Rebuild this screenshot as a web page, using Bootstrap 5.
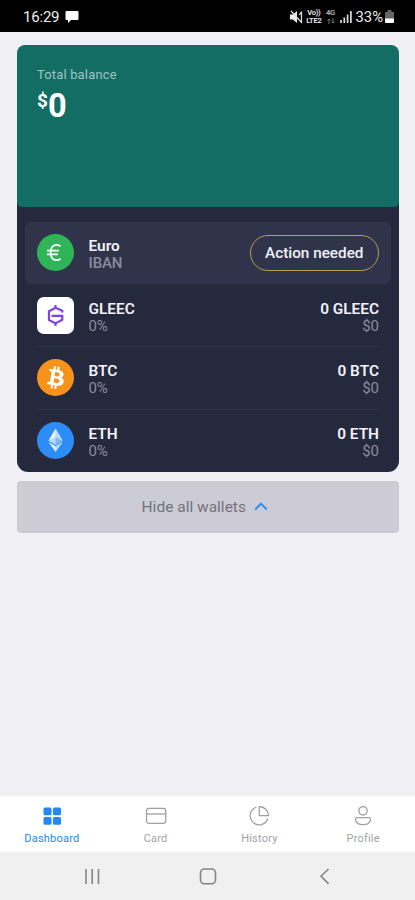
<!DOCTYPE html>
<html lang="en">
<head>
<meta charset="utf-8">
<meta name="viewport" content="width=device-width, initial-scale=1">
<title>Wallet dashboard</title>
<link href="https://cdn.jsdelivr.net/npm/bootstrap@5.3.0/dist/css/bootstrap.min.css" rel="stylesheet">
<style>
html,body{height:100%}
body{font-family:Roboto,sans-serif;background:#efeff4;overflow:hidden}
svg{display:block;flex:none}
.status{height:32px;background:#000;color:#eee;font-size:15.4px;line-height:32px;padding:1px 21px 0 23px}
.clock{font-size:15px;letter-spacing:-.2px}
.battery-text{font-size:14.8px;margin-left:4px}
.tiny{font-size:7.6px;line-height:8px;font-weight:600;text-align:center;letter-spacing:-.3px;margin-left:3px}
.net{color:#bbb;margin-left:4px}
.content{padding:12.5px 16px 0 16.5px}
.wallets{background:#25293d;border-radius:11px;height:427.5px}
.balance{background:#146d65;height:162px;border-radius:8px 8px 5px 5px;padding:21.5px 20.5px}
.balance-label{color:#9cc6c0;font-size:12.9px;line-height:17px;letter-spacing:.2px}
.amount{font-size:32.5px;line-height:40px;font-weight:700;margin-top:2.5px}
.amount .cur{font-size:19px;line-height:20px;margin-top:5.5px}
.rows{padding:15px 8px 0}
.wrow{height:62.7px;padding:0 12px 0 12.5px}
.wrow.euro{background:#2f344a;border-radius:6px}
.inner{border-bottom:1px solid #2d3145}
.wrow:last-child .inner{border-color:transparent}
.names{margin-left:14.5px}
.names,.sums{padding-top:4px}
.euro .names{padding-top:3px}
.t1{color:#f2f2f8;font-size:15.4px;line-height:17px;font-weight:600}
.t2{color:#8a8c9d;font-size:15px;line-height:16px}
.names .t2{letter-spacing:-.1px}
.semi{font-weight:500}
.action{border:1.5px solid #b5a04c!important;border-radius:18px;width:129.5px;height:35.5px;color:#f0f0f7;font-size:15.3px;font-weight:500;padding:2px 0 0;background:none}
.hide-btn{height:52.5px;margin-top:8.5px;background:#cdcbd6;border-radius:4px;color:#74737d;font-size:15.5px;padding:2px 6px 0 0;border:0}
.tabs{height:56px;background:#fff}
.tab{color:#a2a2a4;font-size:11px;line-height:14px;letter-spacing:.2px;padding-top:7.5px}
.tab.on{color:#2488f0}
.sysnav{height:48px;background:#f0f0f0}
</style>
<script src="https://cdn.jsdelivr.net/npm/bootstrap@5.3.0/dist/js/bootstrap.bundle.min.js"></script>
</head>
<body>
<div class="d-flex flex-column vh-100">
  <header class="status d-flex align-items-center justify-content-between">
    <div class="d-flex align-items-center gap-1"><span class="clock">16:29</span>
      <svg width="16" height="14" viewBox="-2 0 16 14"><path d="M1.500 1h11q1 0 1 1v7q0 1-1 1H6l-3 3v-3H1.500q-1 0-1-1V2q0-1 1-1z" fill="#fff"/></svg>
    </div>
    <div class="d-flex align-items-center">
      <svg width="13" height="14" viewBox="0 0 13 14"><path d="M0 4.500h3L7 1v12L3 9.500H0z" fill="#eee"/><path d="M1 1l11 12M9.300 5l2-3M11.500 1.500v11" fill="none" stroke="#ddd" stroke-width="1.300"/></svg>
      <div class="tiny"><div>Vo))</div><div>LTE2</div></div>
      <div class="tiny net"><div>4G</div>
        <svg width="10" height="8" viewBox="0 0 10 8"><path d="M3 7V2M1.500 3.500L3 2l1.500 1.500M7 1v5M5.500 4.500L7 6l1.500-1.500" fill="none" stroke="#777"/></svg></div>
      <svg width="16" height="13" viewBox="-4 0 16 13"><path d="M1 10v3M4.300 7.500V13M7.600 4.500V13M10.900 1v12" stroke="#ddd" stroke-width="1.700"/></svg>
      <span class="battery-text">33%</span>
      <svg width="11" height="13" viewBox="-2 0 11 13"><path d="M2.500 0h4v2H9v7H0V2h2.500z" fill="#666"/><path d="M0 8.500h9V12q0 1-1 1H1q-1 0-1-1z" fill="#fff"/></svg>
    </div>
  </header>

  <main class="content flex-grow-1">
    <section class="wallets">
      <div class="balance">
        <div class="balance-label">Total balance</div>
        <div class="amount d-flex text-white"><span class="cur">$</span>0</div>
      </div>
      <div class="rows">
        <div class="wrow euro d-flex align-items-center">
          <svg width="37" height="37" viewBox="0 0 37 37"><circle cx="18.500" cy="18.500" r="18.500" fill="#2fb457"/><path d="M23.500 12.200q-1.600-1.400-3.800-1.400c-4 0-6 3.200-6 7.700s2 7.700 6 7.700q2.200 0 3.800-1.400M10 16.700H22M10 20.300H21" fill="none" stroke="#fff" stroke-width="1.800"/></svg>
          <div class="names"><div class="t1">Euro</div><div class="t2 semi">IBAN</div></div>
          <button class="btn action ms-auto">Action needed</button>
        </div>
        <div class="wrow"><div class="inner h-100 d-flex align-items-center">
          <svg width="37" height="37" viewBox="0 0 37 37"><rect width="37" height="37" rx="7" fill="#fff"/><path d="M25.300 15.500V13.800L18.500 10.800 12 14.200v8.800l6.500 3.400 6.800-3.600v-4H14.500M18.500 8v3M18.500 26v3" fill="none" stroke="#7d43e5" stroke-width="2.200" stroke-linejoin="round"/></svg>
          <div class="names"><div class="t1">GLEEC</div><div class="t2">0%</div></div>
          <div class="sums ms-auto text-end"><div class="t1">0 GLEEC</div><div class="t2">$0</div></div>
        </div></div>
        <div class="wrow"><div class="inner h-100 d-flex align-items-center">
          <svg width="37" height="37" viewBox="0 0 32 32"><circle cx="16" cy="16" r="16" fill="#f7931a"/><path transform="rotate(-5 16 16)" fill="#fff" d="M23.189 14.020c.314-2.096-1.283-3.223-3.465-3.975l.708-2.840-1.728-.43-.690 2.765c-.454-.114-.920-.220-1.385-.326l.695-2.783L15.596 6l-.708 2.839c-.376-.086-.746-.170-1.104-.260l.002-.009-2.384-.595-.460 1.846s1.283.294 1.256.312c.700.175.826.638.805 1.006l-.806 3.235c.048.012.110.030.180.057l-.183-.045-1.130 4.532c-.086.212-.303.531-.793.410.018.025-1.256-.313-1.256-.313l-.858 1.978 2.250.561c.418.105.828.215 1.231.318l-.715 2.872 1.727.430.708-2.840c.472.127.930.245 1.378.357l-.706 2.828 1.728.430.715-2.866c2.948.558 5.164.333 6.097-2.333.752-2.146-.037-3.385-1.588-4.192 1.130-.260 1.980-1.003 2.207-2.538zm-3.950 5.538c-.533 2.147-4.148.986-5.320.695l.950-3.805c1.172.293 4.929.872 4.370 3.110zm.535-5.569c-.487 1.953-3.495.960-4.470.717l.860-3.450c.975.243 4.118.696 3.610 2.733z"/></svg>
          <div class="names"><div class="t1">BTC</div><div class="t2">0%</div></div>
          <div class="sums ms-auto text-end"><div class="t1">0 BTC</div><div class="t2">$0</div></div>
        </div></div>
        <div class="wrow"><div class="inner h-100 d-flex align-items-center">
          <svg width="37" height="37" viewBox="0 0 37 37"><circle cx="18.500" cy="18.500" r="18.500" fill="#2c8df7"/><path d="M18.500 6.500L11.500 18.500l7 4.200 7-4.200z" fill="#e5f2ff"/><path d="M18.500 6.500v16.200l7-4.200z" fill="#b5d8fc"/><path d="M11.500 18.500l7-3.200v7.400z" fill="#b5d8fc"/><path d="M18.500 15.300l7 3.200-7 4.200z" fill="#7cb8f8"/><path d="M11.500 20l7 4.200 7-4.200-7 9.800z" fill="#e5f2ff"/><path d="M18.500 24.200l7-4.200-7 9.800z" fill="#b5d8fc"/></svg>
          <div class="names"><div class="t1">ETH</div><div class="t2">0%</div></div>
          <div class="sums ms-auto text-end"><div class="t1">0 ETH</div><div class="t2">$0</div></div>
        </div></div>
      </div>
    </section>
    <button class="hide-btn w-100 d-flex align-items-center justify-content-center gap-2">Hide all wallets
      <svg width="14" height="11" viewBox="0 0 14 11"><path d="M1.200 7.500L7 1.700l5.800 5.800" fill="none" stroke="#2c8fef" stroke-width="2"/></svg>
    </button>
  </main>

  <nav class="tabs row g-0">
    <div class="tab on col d-flex flex-column align-items-center">
      <svg width="24" height="24" viewBox="0 0 24 24" fill="#2488f0"><rect x="3.500" y="3.500" width="8" height="7.800" rx="1.500"/><rect x="13" y="3.500" width="8" height="7.800" rx="1.500"/><rect x="3.500" y="13" width="8" height="7.800" rx="1.500"/><rect x="13" y="13" width="8" height="7.800" rx="1.500"/></svg>
      <span class="mt-1">Dashboard</span></div>
    <div class="tab col d-flex flex-column align-items-center">
      <svg width="24" height="24" viewBox="0 0 24 24" fill="none" stroke="#a0a0a2" stroke-width="1.300"><rect x="2.500" y="4.300" width="19.200" height="15" rx="2.500"/><path d="M2.500 10h19.200"/></svg>
      <span class="mt-1">Card</span></div>
    <div class="tab col d-flex flex-column align-items-center">
      <svg width="24" height="24" viewBox="0 0 24 24" fill="none" stroke="#a0a0a2" stroke-width="1.300"><path d="M9.500 3.200A9 9 0 1 0 20.800 14.500"/><path d="M12.300 2.500v9.200h9.200A9.200 9.200 0 0 0 12.300 2.500z" stroke-linejoin="round"/></svg>
      <span class="mt-1">History</span></div>
    <div class="tab col d-flex flex-column align-items-center">
      <svg width="24" height="24" viewBox="0 0 24 24" fill="none" stroke="#a0a0a2" stroke-width="1.300"><circle cx="12" cy="6.800" r="4.200"/><path d="M6.500 13.600H17.500q2.200 0 2 2.200c-.5 3.200-4 4.800-7.500 4.800s-7-1.600-7.500-4.800q-.2-2.200 2-2.200z"/></svg>
      <span class="mt-1">Profile</span></div>
  </nav>
  <footer class="sysnav d-flex justify-content-center align-items-center">
    <svg width="248" height="20" viewBox="0 0 248 20" fill="none" stroke="#858585" stroke-width="1.600"><path d="M2 3v15M8.200 3v15M14.500 3v15"/><rect x="116.500" y="3" width="15" height="14.800" rx="4"/><path d="M244.500 3l-7.500 7.300 7.500 7.300"/></svg>
  </footer>
</div>
</body>
</html>
